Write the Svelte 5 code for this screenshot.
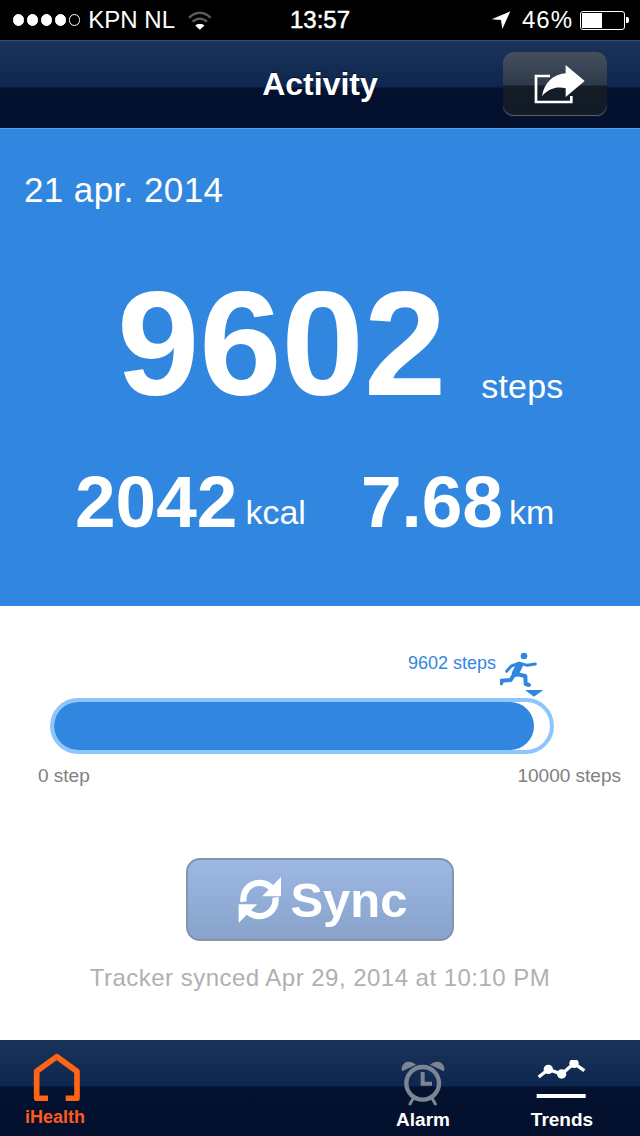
<script>
  const dots = [1, 1, 1, 1, 0];
  const steps = 9602;
  const goal = 10000;
  const fill = Math.round((steps / goal) * 500);
</script>

<div class="screen">
  <header class="status">
    <div class="status-left">
      <span class="dots">
        {#each dots as on}
          <i class="dot" class:on></i>
        {/each}
      </span>
      <span class="carrier">KPN NL</span>
      <svg class="wifi" viewBox="560 28 80 64" aria-hidden="true">
        <path d="M568 52 C588 32 614 32 634 52" fill="none" stroke="#5e5e5e" stroke-width="7"/>
        <path d="M579 64 C592 51 610 51 623 64" fill="none" stroke="#5e5e5e" stroke-width="7"/>
        <path d="M587 75 C594 69 608 69 615 75 L601 88 Z" fill="#fff"/>
      </svg>
    </div>
    <div class="time">13:57</div>
    <div class="status-right">
      <svg class="loc" viewBox="510 32 66 60" aria-hidden="true">
        <path d="M515 60 L571 36 L547 89 L543 62 Z" fill="#fff"/>
      </svg>
      <span class="pct">46%</span>
      <span class="battery"><span class="level"></span></span>
      <span class="nub"></span>
    </div>
  </header>

  <nav class="nav">
    <span></span>
    <h1>Activity</h1>
    <div class="nav-end">
      <button class="share" aria-label="Share">
        <svg viewBox="630 180 180 135" aria-hidden="true">
          <path d="M690 225 H648 V303 H754 V285" fill="none" stroke="#fff" stroke-width="8"/>
          <path d="M737 192 L794 240 L737 288 V262 C712 256 686 262 666 286 C672 246 698 220 737 217 Z" fill="#fff"/>
        </svg>
      </button>
    </div>
  </nav>

  <section class="summary">
    <div class="date">21 apr. 2014</div>
    <div class="big-row">
      <span class="big">9602</span>
      <span class="unit steps-unit">steps</span>
    </div>
    <div class="sub-row">
      <span class="sub">2042</span>
      <span class="unit">kcal</span>
      <span class="sub km">7.68</span>
      <span class="unit">km</span>
    </div>
  </section>

  <main class="detail">
    <div class="marker">
      <span class="marker-label">9602 steps</span>
      <svg class="runner" viewBox="360 30 135 141" aria-hidden="true">
        <circle cx="432" cy="48" r="10" fill="#3187df"/>
        <g fill="none" stroke="#3187df" stroke-linecap="round" stroke-linejoin="round">
          <path d="M418 76 L406 100" stroke-width="21"/>
          <path d="M420 70 L442 76 L466 72" stroke-width="9"/>
          <path d="M416 70 L394 78 L380 94" stroke-width="9"/>
          <path d="M408 102 L436 108 L437 132 L447 135" stroke-width="12"/>
          <path d="M402 104 L392 120 L364 122 L364 130" stroke-width="12"/>
        </g>
        <path d="M435 150 H490 L462 170 Z" fill="#3187df"/>
      </svg>
    </div>

    <div class="track">
      <div class="fill" style="width: {fill}px"></div>
    </div>

    <div class="scale">
      <span>0 step</span>
      <span>10000 steps</span>
    </div>

    <button class="sync">
      <svg viewBox="200 90 140 145" aria-hidden="true">
        <g fill="none" stroke="#fff" stroke-width="19">
          <path d="M222 168 A49 49 0 0 1 306 126"/>
          <path d="M318 155 A49 49 0 0 1 234 196"/>
        </g>
        <path d="M335 93 V151 H278 Z" fill="#fff"/>
        <path d="M207 232 V175 H263 Z" fill="#fff"/>
      </svg>
      <span>Sync</span>
    </button>

    <p class="synced">Tracker synced Apr 29, 2014 at 10:10 PM</p>
  </main>

  <footer class="tabs">
    <div class="tab home">
      <svg viewBox="100 70 144 144" aria-hidden="true">
        <path d="M145 206 H111 V125 L171 81 L232 125 V206 H198" fill="none" stroke="#ff6316" stroke-width="17" stroke-linejoin="round"/>
      </svg>
      <span>iHealth</span>
    </div>
    <div class="tab alarm">
      <svg viewBox="54 90 138 138" aria-hidden="true">
        <g fill="none" stroke="#7d8592">
          <circle cx="122" cy="160" r="49" stroke-width="13"/>
          <path d="M122 126 V161 H150" stroke-width="12"/>
          <path d="M92 208 L84 222 M152 208 L160 222" stroke-width="9" stroke-linecap="round"/>
        </g>
        <path d="M60 124 C54 96 82 86 102 104 Z" fill="#7d8592"/>
        <path d="M186 124 C192 96 164 86 144 104 Z" fill="#7d8592"/>
      </svg>
      <span>Alarm</span>
    </div>
    <div class="tab trends">
      <svg viewBox="465 90 156 120" aria-hidden="true">
        <path d="M476 141 L505 118 L545 132 L582 100 L613 122" fill="none" stroke="#fff" stroke-width="10"/>
        <circle cx="505" cy="118" r="14" fill="#fff"/>
        <circle cx="545" cy="132" r="14" fill="#fff"/>
        <circle cx="582" cy="100" r="14" fill="#fff"/>
        <rect x="470" y="192" width="147" height="12" fill="#fff"/>
      </svg>
      <span>Trends</span>
    </div>
  </footer>
</div>

<style>
  :global(body) {
    margin: 0;
    background: #fff;
  }
  .screen {
    width: 640px;
    height: 1136px;
    display: flex;
    flex-direction: column;
    overflow: hidden;
    font-family: "Liberation Sans", Arial, sans-serif;
    color: #fff;
  }

  .status {
    height: 40px;
    flex: none;
    background: #000;
    display: grid;
    grid-template-columns: 1fr auto 1fr;
    align-items: center;
    font-size: 24px;
    line-height: 40px;
  }
  .status-left {
    display: flex;
    align-items: center;
    padding-left: 13px;
  }
  .dots {
    display: flex;
    gap: 2.6px;
  }
  .dot {
    width: 11.4px;
    height: 11.4px;
    border-radius: 50%;
    border: 1px solid #fff;
    box-sizing: border-box;
  }
  .dot.on {
    background: #fff;
  }
  .carrier {
    margin-left: 8px;
  }
  .wifi {
    width: 27px;
    height: 21px;
    margin-left: 11px;
  }
  .time {
    -webkit-text-stroke: 0.5px #fff;
  }
  .status-right {
    display: flex;
    align-items: center;
    justify-content: flex-end;
    padding-right: 11px;
  }
  .loc {
    width: 22px;
    height: 20px;
    margin-right: 10px;
  }
  .pct {
    letter-spacing: 1px;
  }
  .battery {
    width: 45px;
    height: 19px;
    box-sizing: border-box;
    border: 1px solid #fff;
    border-radius: 3px;
    margin-left: 7px;
    padding: 1px;
    display: flex;
  }
  .level {
    width: 20px;
    background: #fff;
  }
  .nub {
    width: 3px;
    height: 6px;
    margin-left: 1px;
    background: #fff;
    border-radius: 0 2px 2px 0;
  }

  .nav {
    height: 88px;
    flex: none;
    box-sizing: border-box;
    border-top: 1px solid #2f4f78;
    background: linear-gradient(#1a3359 0, #0e2750 46px, #04112f 47px, #03102d 100%);
    display: grid;
    grid-template-columns: 1fr auto 1fr;
    align-items: center;
  }
  h1 {
    margin: 0;
    font-size: 32px;
    font-weight: 700;
    text-shadow: 0 -1px 1px rgba(0, 0, 0, 0.5);
  }
  .nav-end {
    display: flex;
    justify-content: flex-end;
    padding-right: 33px;
  }
  .share {
    width: 104px;
    height: 65px;
    padding: 0;
    box-sizing: border-box;
    border: 0;
    border-radius: 11px;
    box-shadow: 0 -1px 0 #0a1626 inset, 0 -2px 0 #556070 inset;
    background: linear-gradient(#454f5e 0, #2d3a4a 33px, #141c27 34px, #121a25 100%);
    display: flex;
    align-items: center;
    justify-content: center;
  }
  .share svg {
    width: 60px;
    height: 45px;
    margin-left: 10px;
    margin-bottom: 2px;
  }

  .summary {
    height: 478px;
    flex: none;
    box-sizing: border-box;
    background: #3187df;
    border-top: 1px solid #5a9fe6;
    padding-top: 41px;
  }
  .date {
    font-size: 35px;
    line-height: 40px;
    padding-left: 24px;
    letter-spacing: 0.4px;
  }
  .big-row {
    display: flex;
    align-items: flex-end;
    padding-left: 117px;
    margin-top: 59px;
  }
  .big {
    font-size: 148px;
    line-height: 150px;
    font-weight: 700;
  }
  .unit {
    font-size: 34px;
  }
  .steps-unit {
    margin-left: 35px;
    line-height: 66px;
    letter-spacing: 0.2px;
  }
  .sub-row {
    display: flex;
    align-items: flex-end;
    padding-left: 75px;
    margin-top: 47px;
  }
  .sub-row .unit {
    line-height: 52px;
  }
  .sub {
    font-size: 73px;
    line-height: 72px;
    font-weight: 700;
    margin-right: 8px;
  }
  .km {
    margin-left: 55px;
    margin-right: 6px;
  }

  .detail {
    flex: 1;
    background: #fff;
    display: flex;
    flex-direction: column;
    padding-top: 44px;
  }
  .marker {
    display: flex;
    padding-left: 408px;
    height: 47px;
    box-sizing: border-box;
  }
  .marker-label {
    color: #3187df;
    font-size: 18px;
    line-height: 26px;
    width: 92px;
    white-space: nowrap;
  }
  .runner {
    width: 45px;
    height: 47px;
    flex: none;
  }
  .track {
    width: 504px;
    height: 56px;
    margin: 1px 0 0 50px;
    box-sizing: border-box;
    border: 4px solid #8ec5fb;
    border-radius: 28px;
  }
  .fill {
    height: 48px;
    background: #3187df;
    border-radius: 24px;
  }
  .scale {
    display: flex;
    justify-content: space-between;
    margin-top: 11px;
    padding: 0 19px 0 38px;
    font-size: 19px;
    line-height: 22px;
    color: #808080;
  }
  .sync {
    width: 268px;
    height: 83px;
    margin: 71px 0 0 186px;
    padding: 0 0 0 4px;
    box-sizing: border-box;
    border: 2px solid #8495ac;
    border-radius: 14px;
    background: linear-gradient(#9db8e4, #87a3ca);
    color: #fff;
    font-family: inherit;
    font-weight: 700;
    font-size: 49px;
    display: flex;
    align-items: center;
    justify-content: center;
    gap: 7px;
  }
  .sync svg {
    width: 47px;
    height: 48px;
  }
  .synced {
    margin: 22px 0 0;
    text-align: center;
    font-size: 24px;
    line-height: 30px;
    letter-spacing: 0.47px;
    color: #b0b0b0;
  }

  .tabs {
    height: 96px;
    flex: none;
    background: linear-gradient(#1a3359 0, #0e2750 46px, #04112f 47px, #03102d 100%);
    display: flex;
    align-items: flex-start;
    padding-right: 38px;
  }
  .tab {
    display: flex;
    flex-direction: column;
    align-items: center;
    font-weight: 700;
    font-size: 19px;
    line-height: 22px;
  }
  .tab svg {
    display: block;
  }
  .home {
    width: 110px;
    padding-top: 13px;
    margin-right: auto;
    color: #ff5a1a;
    font-size: 18px;
  }
  .home svg {
    width: 48px;
    height: 48px;
    margin-left: 4px;
    margin-bottom: 5px;
  }
  .alarm {
    width: 80px;
    padding-top: 20px;
    margin-right: 59px;
  }
  .alarm svg {
    width: 46px;
    height: 46px;
    margin-bottom: 3px;
    margin-left: 0;
  }
  .trends {
    width: 80px;
    padding-top: 20px;
  }
  .trends svg {
    width: 52px;
    height: 40px;
    margin-bottom: 9px;
    margin-left: -2px;
  }
</style>
